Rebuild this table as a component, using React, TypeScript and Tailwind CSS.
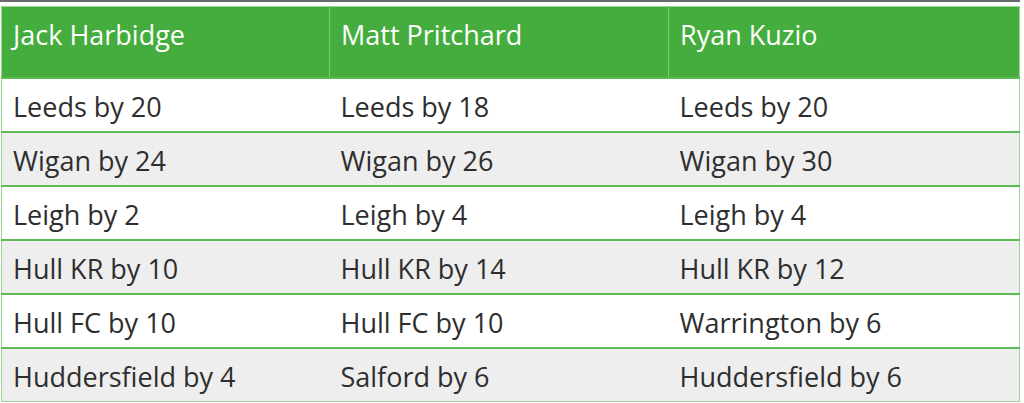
const players = ["Jack Harbidge", "Matt Pritchard", "Ryan Kuzio"];

const picks = [
  ["Leeds by 20", "Leeds by 18", "Leeds by 20"],
  ["Wigan by 24", "Wigan by 26", "Wigan by 30"],
  ["Leigh by 2", "Leigh by 4", "Leigh by 4"],
  ["Hull KR by 10", "Hull KR by 14", "Hull KR by 12"],
  ["Hull FC by 10", "Hull FC by 10", "Warrington by 6"],
  ["Huddersfield by 4", "Salford by 6", "Huddersfield by 6"],
];

export default function App() {
  return (
    <div className="h-[403px] w-[1024px] overflow-hidden bg-white font-['Open_Sans','Noto_Sans',sans-serif]">
      <div className="h-[2px] w-[1020px] bg-[#6b6b6b]" />
      <div className="pt-[4px] pl-[1px]">
        <table className="w-[1018px] table-fixed border-collapse border border-[#9ad596]">
          <colgroup>
            <col className="w-[328px]" />
            <col className="w-[339px]" />
            <col className="w-[351px]" />
          </colgroup>
          <thead>
            <tr className="h-[71px] bg-[#44ad3d]">
              {players.map((p) => (
                <th
                  key={p}
                  className="border-l border-[#7fc878] px-[11px] pb-[14px] text-left align-middle text-[27px] leading-none font-normal text-white first:border-l-0"
                >
                  {p}
                </th>
              ))}
            </tr>
          </thead>
          <tbody>
            {picks.map((row, i) => (
              <tr
                key={i}
                className={`h-[54px] border-t-2 border-[#5cbb52] ${i % 2 === 1 ? "bg-[#eeeeee]" : "bg-white"}`}
              >
                {row.map((cell, j) => (
                  <td
                    key={j}
                    className="px-[11px] pt-[4px] align-middle text-[27px] leading-none text-[#2e2e2e]"
                  >
                    {cell}
                  </td>
                ))}
              </tr>
            ))}
          </tbody>
        </table>
      </div>
    </div>
  );
}
